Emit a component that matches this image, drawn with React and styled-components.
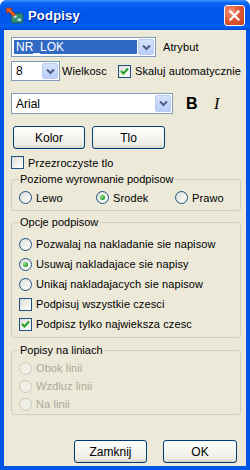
import React from "react";
import styled, { createGlobalStyle, css } from "styled-components";

const GlobalStyle = createGlobalStyle`
  html, body {
    margin: 0;
    padding: 0;
    background: #ffffff;
  }
  * {
    box-sizing: border-box;
  }
`

const Window = styled.div`
  width: 250px;
  height: 470px;
  display: flex;
  flex-direction: column;
  background: #0055e5;
  border-radius: 7px 7px 0 0;
  overflow: hidden;
  font-family: "Liberation Sans", Arial, sans-serif;
  font-size: 11px;
  color: #000;
`

const TitleBar = styled.div`
  height: 30px;
  flex: none;
  display: flex;
  align-items: center;
  padding: 0 5px 0 5px;
  gap: 4px;
  background: linear-gradient(
    to bottom,
    #3d95ff 0%,
    #0a66f0 10%,
    #0058ee 30%,
    #0055e8 70%,
    #0060f6 88%,
    #0048d8 100%
  );
`

const Title = styled.div`
  flex: 1;
  color: #fff;
  font-weight: bold;
  font-size: 13px;
  letter-spacing: 0.2px;
  text-shadow: 1px 1px 0 #0a1e8c;
  padding-top: 1px;
`

const CloseBtn = styled.div`
  width: 21px;
  height: 21px;
  border: 1px solid #fff;
  border-radius: 3px;
  background: radial-gradient(circle at 30% 30%, #f39a7c 0%, #e25b37 45%, #c43d1a 100%);
  display: flex;
  align-items: center;
  justify-content: center;
`

const Client = styled.div`
  flex: 1;
  margin: 0 4px 4px;
  background: #ece9d8;
  padding: 7px 5px 3px 7px;
  display: flex;
  flex-direction: column;
`

const Row = styled.div`
  display: flex;
  align-items: center;
  gap: ${(p) => p.gap || 0}px;
  margin-top: ${(p) => p.top || 0}px;
  margin-left: ${(p) => p.left || 0}px;
`

const ButtonRow = styled.div`
  display: flex;
  justify-content: flex-end;
  gap: 16px;
  margin-right: 4px;
`

const Combo = styled.div`
  width: ${(p) => p.w}px;
  height: ${(p) => p.h || 20}px;
  border: 1px solid #7f9db9;
  background: #fff;
  display: flex;
  padding: 1px;
  flex: none;
`

const ComboText = styled.div`
  flex: 1;
  margin: 1px;
  padding-left: 2px;
  display: flex;
  align-items: center;
  font-size: 12px;
  ${(p) =>
    p.selected &&
    css`
      background: #316ac5;
      color: #fff;
    `}
`

const DropBtn = styled.div`
  width: 16px;
  flex: none;
  border: 1px solid #b9cbf2;
  border-radius: 2px;
  background: linear-gradient(to bottom, #d7e3fd, #b9cdfa);
  display: flex;
  align-items: center;
  justify-content: center;
`

const Label = styled.span`
  white-space: nowrap;
  letter-spacing: 0.1px;
  color: ${(p) => (p.disabled ? "#aca899" : "#000")};
  margin-left: ${(p) => p.ml || 0}px;
  ${(p) => p.w && css`width: ${p.w}px;`}
`

const StyleGlyph = styled.span`
  font-size: 16px;
  line-height: 16px;
  ${(p) =>
    p.italic
      ? css`
          font-family: "Liberation Serif", "Times New Roman", serif;
          font-style: italic;
        `
      : css`
          font-family: "Liberation Sans", Arial, sans-serif;
          font-weight: bold;
          margin-left: 13px;
          width: 28px;
        `}
`

const Button = styled.div`
  width: ${(p) => p.w}px;
  height: 23px;
  border: 1px solid #003c74;
  border-radius: 3px;
  background: linear-gradient(to bottom, #ffffff 0%, #f5f4ef 50%, #ecebe5 85%, #d6d0c5 100%);
  display: flex;
  align-items: center;
  justify-content: center;
  font-size: 12px;
`

const Box = styled.div`
  width: 13px;
  height: 13px;
  flex: none;
  border: 1px solid #1c5180;
  background: linear-gradient(135deg, #dcdcd7 0%, #f2f2ee 60%, #ffffff 100%);
  display: flex;
  align-items: center;
  justify-content: center;
`

const Circle = styled.div`
  width: 13px;
  height: 13px;
  flex: none;
  border-radius: 50%;
  border: 1px solid ${(p) => (p.disabled ? "#cac8bb" : "#1c5180")};
  background: ${(p) =>
    p.disabled
      ? "#f0efe6"
      : "linear-gradient(135deg, #dcdcd7 0%, #f2f2ee 60%, #ffffff 100%)"};
  display: flex;
  align-items: center;
  justify-content: center;
`

const Dot = styled.div`
  width: 5px;
  height: 5px;
  border-radius: 50%;
  background: radial-gradient(circle at 35% 35%, #8ee48e 0%, #21a121 70%);
`

const Item = styled.div`
  display: flex;
  align-items: center;
  gap: 4px;
  height: ${(p) => p.h || 13}px;
`

const Group = styled.fieldset`
  margin: ${(p) => p.top || 0}px 0 0 0;
  padding: ${(p) => p.pt || 0}px 7px ${(p) => p.pb || 0}px 7px;
  border: 1px solid #d0d0bf;
  border-radius: 3px;
  min-width: 0;
  display: flex;
  flex-direction: column;
`

const Legend = styled.legend`
  padding: 0 1px;
  line-height: 13px;
  font-size: 11px;
`

const AlignRow = styled.div`
  display: grid;
  grid-template-columns: 77px 79px auto;
  height: 13px;
`

const Spacer = styled.div`
  flex: 1;
`

const Chevron = () => (
  <svg width="9" height="7" viewBox="0 0 9 7">
    <path d="M1 1.5 L4.5 5 L8 1.5" fill="none" stroke="#4d6185" strokeWidth="2" />
  </svg>
);

const Check = () => (
  <svg width="9" height="9" viewBox="0 0 9 9">
    <path d="M1 4 L3.5 6.5 L8 1.5" fill="none" stroke="#21a121" strokeWidth="2" />
  </svg>
);

const AppIcon = () => (
  <svg width="19" height="19" viewBox="0 0 18 18">
    <rect x="6" y="7" width="11" height="9" rx="1" fill="#2f8f6f" stroke="#1b5e7a" />
    <rect x="8" y="9" width="3" height="2" fill="#cfe8ff" />
    <rect x="12" y="12" width="3" height="2" fill="#cfe8ff" />
    <path d="M1 2 L7 2 L5.5 3.5 L10 8 L8 10 L3.5 5.5 L2 7 Z" fill="#f06020" stroke="#a02810" strokeWidth="0.7" />
  </svg>
);

const CloseX = () => (
  <svg width="11" height="11" viewBox="0 0 11 11">
    <path d="M1.5 1.5 L9.5 9.5 M9.5 1.5 L1.5 9.5" stroke="#fff" strokeWidth="2.2" strokeLinecap="square" />
  </svg>
);

const Checkbox = ({ checked, label, h }) => (
  <Item h={h}>
    <Box>{checked && <Check />}</Box>
    <Label>{label}</Label>
  </Item>
);

const Radio = ({ checked, disabled, label, h }) => (
  <Item h={h}>
    <Circle disabled={disabled}>{checked && <Dot />}</Circle>
    <Label disabled={disabled}>{label}</Label>
  </Item>
);

const App = () => {
  return (
    <>
      <GlobalStyle />
      <Window>
        <TitleBar>
          <AppIcon />
          <Title>Podpisy</Title>
          <CloseBtn>
            <CloseX />
          </CloseBtn>
        </TitleBar>
        <Client>
          <Row gap={7}>
            <Combo w={145}>
              <ComboText selected>NR_LOK</ComboText>
              <DropBtn>
                <Chevron />
              </DropBtn>
            </Combo>
            <Label>Atrybut</Label>
          </Row>
          <Row top={4}>
            <Combo w={49}>
              <ComboText>8</ComboText>
              <DropBtn>
                <Chevron />
              </DropBtn>
            </Combo>
            <Label ml={2} w={58}>Wielkosc</Label>
            <Checkbox checked label="Skaluj automatycznie" />
          </Row>
          <Row top={12}>
            <Combo w={162} h={21}>
              <ComboText>Arial</ComboText>
              <DropBtn>
                <Chevron />
              </DropBtn>
            </Combo>
            <StyleGlyph>B</StyleGlyph>
            <StyleGlyph italic>I</StyleGlyph>
          </Row>
          <Row top={12} left={2} gap={7}>
            <Button w={72}>Kolor</Button>
            <Button w={73}>Tlo</Button>
          </Row>
          <Row top={7}>
            <Checkbox label="Przezroczyste tlo" />
          </Row>
          <Group top={4} pt={5} pb={6}>
            <Legend>Poziome wyrownanie podpisow</Legend>
            <AlignRow>
              <Radio label="Lewo" />
              <Radio checked label="Srodek" />
              <Radio label="Prawo" />
            </AlignRow>
          </Group>
          <Group top={5} pt={5} pb={3}>
            <Legend>Opcje podpisow</Legend>
            <Radio h={20} label="Pozwalaj na nakladanie sie napisow" />
            <Radio h={20} checked label="Usuwaj nakladajace sie napisy" />
            <Radio h={20} label="Unikaj nakladajacych sie napisow" />
            <Checkbox h={20} label="Podpisuj wszystkie czesci" />
            <Checkbox h={20} checked label="Podpisz tylko najwieksza czesc" />
          </Group>
          <Group top={6} pt={2} pb={1}>
            <Legend>Popisy na liniach</Legend>
            <Radio h={18} disabled label="Obok linii" />
            <Radio h={18} disabled label="Wzdluz linii" />
            <Radio h={18} disabled label="Na linii" />
          </Group>
          <Spacer />
          <ButtonRow>
            <Button w={73}>Zamknij</Button>
            <Button w={74}>OK</Button>
          </ButtonRow>
        </Client>
      </Window>
    </>
  );
};

export default App;
